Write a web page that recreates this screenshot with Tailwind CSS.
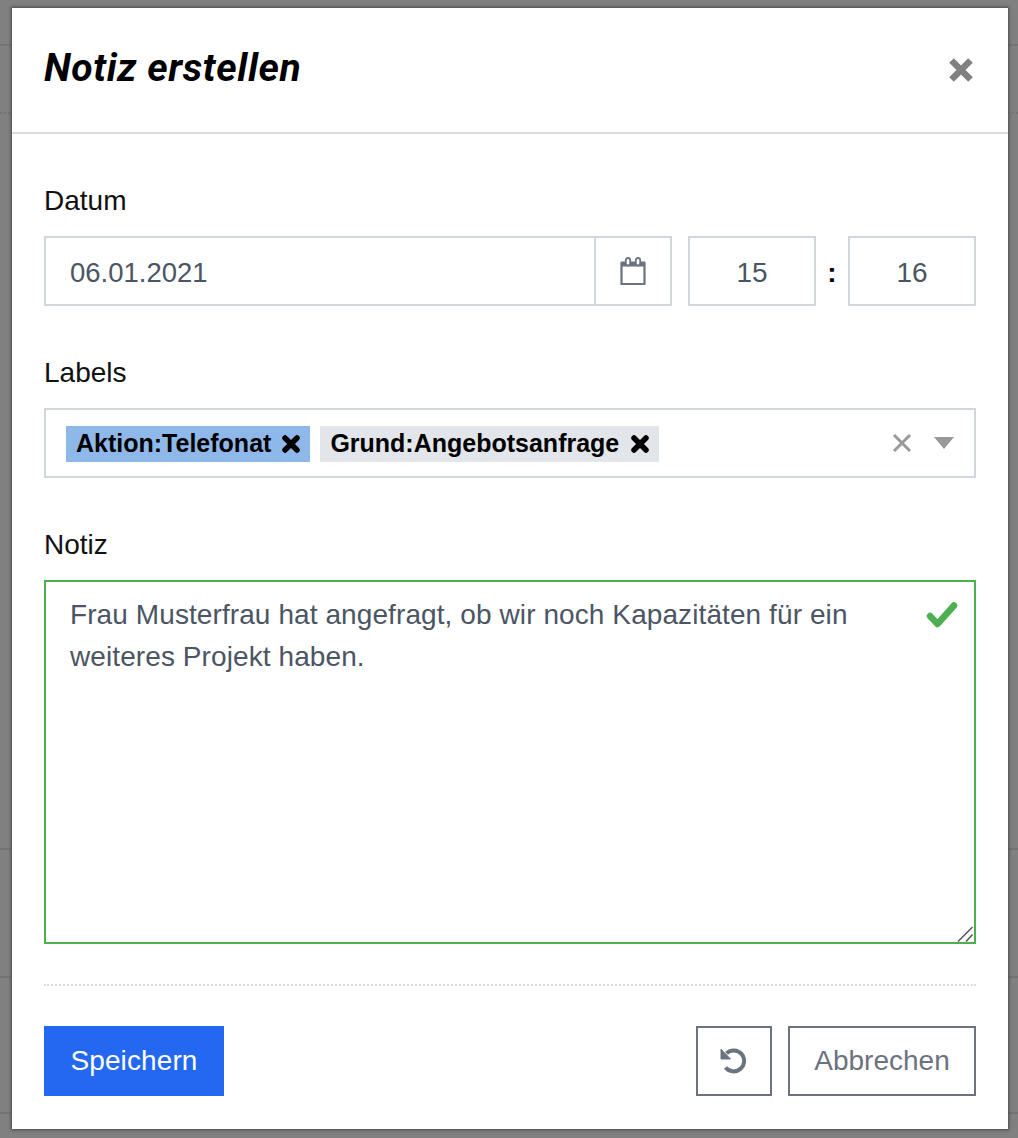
<!DOCTYPE html>
<html lang="de">
<head>
  <meta charset="UTF-8">
  <title>Notiz erstellen</title>
  <script src="https://cdn.jsdelivr.net/npm/@tailwindcss/browser@4"></script>
</head>
<body class="relative h-[1138px] overflow-hidden bg-[#808080] font-['Liberation_Sans',Arial,sans-serif] text-[28px] text-[#4b5563]">

  <!-- page behind the overlay -->
  <div class="absolute left-0 right-0 top-[44px] h-[2px] bg-[#737373]"></div>
  <div class="absolute left-0 right-0 top-[112px] border-t-2 border-dotted border-[#737373]"></div>
  <div class="absolute left-0 right-0 top-[848px] h-[2px] bg-[#737373]"></div>
  <div class="absolute left-0 right-0 top-[976px] h-[2px] bg-[#737373]"></div>
  <div class="absolute left-0 right-0 top-[1112px] h-[2px] bg-[#737373]"></div>

  <!-- Modal -->
  <div class="absolute left-[12px] top-[8px] h-[1121px] w-[996px] bg-white shadow-[0_0_3px_1px_#4a4a4a]">
    <header class="flex h-[126px] items-center justify-between border-b-2 border-[#dcdcdc] pl-[32px] pr-[34px]">
      <h1 class="mb-[4px] font-['Roboto',sans-serif] text-[39px] font-bold italic tracking-[0.6px] text-black">Notiz erstellen</h1>
      <svg class="h-[26px] w-[26px]" viewBox="0 0 26 26" aria-hidden="true"><path d="M3.5 3.5 22.5 22.5M22.5 3.5 3.5 22.5" stroke="#808080" stroke-width="6.5"/></svg>
    </header>

    <div class="px-[32px]">
      <label class="mt-[49px] block h-[36px] leading-[36px] text-[#111]">Datum</label>

      <div class="mt-[17px] flex h-[70px] items-center">
        <div class="flex h-full w-[628px] border-2 border-[#cfd6dd]">
          <input value="06.01.2021" class="min-w-0 flex-1 bg-transparent px-[24px] pt-[3px] text-[27.5px] text-[#4b5563] outline-none">
          <div class="flex w-[76px] items-center justify-center border-l-2 border-[#cfd6dd]">
            <svg class="mb-[1px] h-[28px] w-[26px]" viewBox="0 0 26 28" fill="none" aria-hidden="true">
              <path d="M1.5 5.5H24.5V27H1.5Z" stroke="#6b7280" stroke-width="2.2" stroke-linejoin="round"/>
              <rect x="1" y="5" width="24" height="4.5" fill="#6b7280"/>
              <rect x="5.8" y="1" width="4.4" height="7.5" rx="2.2" fill="#fff" stroke="#6b7280" stroke-width="1.8"/>
              <rect x="15.8" y="1" width="4.4" height="7.5" rx="2.2" fill="#fff" stroke="#6b7280" stroke-width="1.8"/>
            </svg>
          </div>
        </div>
        <input value="15" class="ml-[16px] h-full w-[128px] border-2 border-[#cfd6dd] pt-[3px] text-center text-[#4b5563] outline-none">
        <span class="w-[32px] pt-[3px] text-center font-bold text-black">:</span>
        <input value="16" class="h-full w-[128px] border-2 border-[#cfd6dd] pt-[3px] text-center text-[#4b5563] outline-none">
      </div>

      <label class="mt-[49px] block h-[36px] leading-[36px] text-[#111]">Labels</label>

      <div class="mt-[17px] flex h-[70px] items-center border-2 border-[#cfd6dd] pl-[20px] pr-[20px]">
        <span class="mt-[2px] flex h-[36px] items-center gap-[11px] bg-[#8fb8ea] pl-[10px] pr-[10px] text-[25px] font-bold text-black">
          Aktion:Telefonat
          <svg class="h-[18px] w-[18px]" viewBox="0 0 18 18" aria-hidden="true"><path d="M3 3 15 15M15 3 3 15" stroke="#000" stroke-width="5.5" stroke-linecap="round"/></svg>
        </span>
        <span class="ml-[10px] mt-[2px] flex h-[36px] items-center gap-[12px] bg-[#e2e5e9] pl-[10px] pr-[10px] text-[25px] font-bold text-black">
          Grund:Angebotsanfrage
          <svg class="h-[18px] w-[18px]" viewBox="0 0 18 18" aria-hidden="true"><path d="M3 3 15 15M15 3 3 15" stroke="#000" stroke-width="5.5" stroke-linecap="round"/></svg>
        </span>
        <svg class="ml-auto mr-[2px] h-[20px] w-[20px]" viewBox="0 0 20 20" aria-hidden="true"><path d="M2 2 18 18M18 2 2 18" stroke="#999" stroke-width="3"/></svg>
        <svg class="ml-[20px] mb-[1px] h-[12px] w-[20px]" viewBox="0 0 20 12" aria-hidden="true"><path d="M0 0H20L10 12Z" fill="#999"/></svg>
      </div>

      <label class="mt-[49px] block h-[36px] leading-[36px] text-[#111]">Notiz</label>

      <div class="relative mt-[17px] h-[364px]">
        <textarea class="block h-full w-full resize-none border-2 border-[#4caf50] pb-[10px] pl-[24px] pr-[60px] pt-[12px] leading-[42px] tracking-[0.09px] text-[#4b5563] outline-none">Frau Musterfrau hat angefragt, ob wir noch Kapazitäten für ein weiteres Projekt haben.</textarea>
        <svg class="absolute right-[18px] top-[21px] h-[28px] w-[32px]" viewBox="0 0 32 28" fill="none" aria-hidden="true"><path d="M4 15 11.5 23 28 4.5" stroke="#4caf50" stroke-width="6.5" stroke-linecap="round" stroke-linejoin="round"/></svg>
        <!-- resize grip -->
        <svg class="absolute bottom-[2px] right-[2px] h-[16px] w-[17px]" viewBox="0 0 17 16" fill="none" aria-hidden="true"><path d="M1 15.5 15.5 1M9 15.5 15.5 8.5" stroke="#555" stroke-width="1.5"/></svg>
      </div>

      <div class="mt-[40px] border-t-2 border-dotted border-[#dcdcdc]"></div>

      <div class="mt-[40px] flex h-[70px] items-stretch">
        <button class="w-[180px] bg-[#2468f2] tracking-[0.1px] text-white">Speichern</button>
        <button class="ml-auto flex w-[76px] items-center justify-center border-2 border-[#6b7280]">
          <svg class="mr-[2px] h-[26px] w-[26px]" viewBox="0 0 26 26" fill="none" aria-hidden="true">
            <path d="M6.5 5.2A10.5 10.5 0 1 1 5.5 19.5" stroke="#6b7280" stroke-width="4"/>
            <path d="M1 1.3V11H10.5Z" fill="#6b7280" stroke="#6b7280" stroke-linejoin="round"/>
          </svg>
        </button>
        <button class="ml-[16px] w-[188px] border-2 border-[#6b7280] text-[#6b7280]">Abbrechen</button>
      </div>
    </div>
  </div>
</body>
</html>
